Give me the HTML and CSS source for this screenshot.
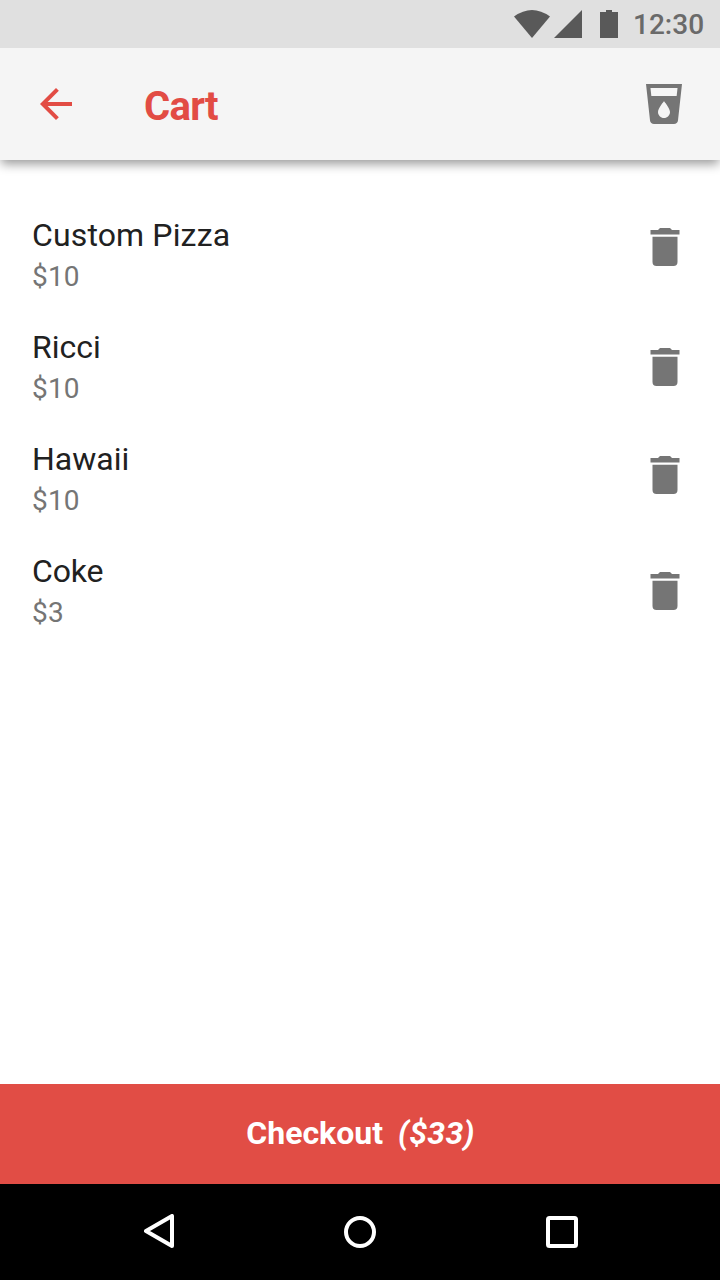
FILE: index.html
```html
<!DOCTYPE html>
<html lang="en">
<head>
<meta charset="utf-8">
<title>Cart</title>
<link rel="stylesheet" href="styles.css">
</head>
<body>
<svg class="defs" width="0" height="0" aria-hidden="true">
  <symbol id="trash" viewBox="0 0 30 38">
    <path d="M0.5 2H8L10 0H20L22 2H29.5V6.4H0.5ZM2.5 8.7H27.5V34Q27.5 38 23.5 38H6.5Q2.5 38 2.5 34Z"/>
  </symbol>
</svg>
<div class="screen">
  <div class="status">
    <svg class="status-icons" viewBox="0 0 106 28">
      <path d="M0 6.5Q18 -6.5 36 6.5L18 28Z"/>
      <path d="M68 0V28H40Z"/>
      <path d="M92 0H98V2H104V28H86V2H92Z"/>
    </svg>
    <span class="clock">12:30</span>
  </div>
  <header class="appbar">
    <svg class="icon back" viewBox="0 0 24 24"><path d="M20 11H7.83l5.59-5.59L12 4l-8 8 8 8 1.41-1.41L7.83 13H20z"/></svg>
    <h1 class="title">Cart</h1>
    <svg class="icon drink" viewBox="0 0 24 24"><path d="M3 2l2.01 18.23C5.13 21.23 5.97 22 7 22h10c1.03 0 1.87-.77 1.99-1.77L21 2H3zm9 17c-1.66 0-3-1.34-3-3 0-2 3-5.4 3-5.4s3 3.4 3 5.4c0 1.66-1.34 3-3 3zm6.33-11H5.67l-.44-4h13.54l-.44 4z"/></svg>
  </header>
  <main class="list">
    <div class="row">
      <div class="text"><div class="name pizza">Custom Pizza</div><div class="price">$10</div></div>
      <svg class="trash trash-high"><use href="#trash"/></svg>
    </div>
    <div class="row">
      <div class="text"><div class="name">Ricci</div><div class="price">$10</div></div>
      <svg class="trash trash-low"><use href="#trash"/></svg>
    </div>
    <div class="row">
      <div class="text"><div class="name">Hawaii</div><div class="price">$10</div></div>
      <svg class="trash"><use href="#trash"/></svg>
    </div>
    <div class="row">
      <div class="text"><div class="name coke">Coke</div><div class="price">$3</div></div>
      <svg class="trash trash-low"><use href="#trash"/></svg>
    </div>
  </main>
  <div class="checkout"><span class="label">Checkout</span><em class="total">($33)</em></div>
  <nav class="navbar">
    <svg class="nav-back" viewBox="0 0 30 34"><path d="M28 2V32L2 17Z"/></svg>
    <svg class="nav-home" viewBox="0 0 32 32"><circle cx="16" cy="16" r="14"/></svg>
    <svg class="nav-recent" viewBox="0 0 32 32"><rect x="2" y="2" width="28" height="28" rx="1.5"/></svg>
  </nav>
</div>
</body>
</html>
```
FILE: styles.css
```css
* { box-sizing: border-box; }
body { margin: 0; font-family: Roboto, "Liberation Sans", sans-serif; background: #fff; }
svg { display: block; flex: none; }
.defs { position: absolute; }
.screen { width: 720px; height: 1280px; display: flex; flex-direction: column; overflow: hidden; }
.status { height: 48px; flex: none; background: #e0e0e0; display: flex; justify-content: flex-end; align-items: center; padding-right: 16px; }
.status-icons { width: 106px; height: 28px; margin-right: 13px; fill: #595959; }
.clock { width: 71px; padding-top: 2px; font-size: 28px; font-weight: 500; line-height: 46px; color: #6a6a6a; white-space: nowrap; }
.appbar { height: 112px; flex: none; background: #f5f5f5; display: flex; align-items: center; padding: 0 32px 0 31.5px; box-shadow: 0 5px 10px -1px rgba(0, 0, 0, .4); clip-path: inset(0 0 -20px 0); }
.icon { width: 48px; height: 48px; }
.back { fill: #e24c44; }
.title { margin: 6px auto 0 64.5px; font-size: 40px; line-height: 48px; font-weight: 700; letter-spacing: -.7px; color: #e24c44; }
.drink { fill: #757575; }
.list { flex: 1; padding: 32px 40px 0 32px; }
.row { height: 112px; display: flex; justify-content: space-between; }
.text { padding-top: 23px; }
.name { font-size: 32px; line-height: 40px; color: #212121; white-space: nowrap; }
.pizza { letter-spacing: .14px; }
.coke { letter-spacing: -.2px; }
.price { margin-top: 6px; font-size: 28px; line-height: 32px; letter-spacing: .2px; color: #757575; }
.trash { width: 30px; height: 38px; margin-top: 40px; fill: #757575; }
.trash-high { margin-top: 36px; }
.trash-low { margin-top: 44px; }
.checkout { height: 100px; flex: none; background: #e14d45; color: #fff; display: flex; justify-content: center; gap: 15px; padding-left: 1px; font-size: 32px; line-height: 98px; font-weight: 700; white-space: nowrap; }
.total { letter-spacing: .3px; }
.navbar { height: 96px; flex: none; background: #000; display: flex; align-items: flex-start; justify-content: space-between; padding: 30px 142px 0 144px; }
.navbar svg { fill: none; stroke: #fff; stroke-width: 4; stroke-linejoin: round; }
.nav-back { width: 30px; height: 34px; }
.nav-home { width: 32px; height: 32px; margin: 2px 0 0; }
.nav-recent { width: 32px; height: 32px; margin-top: 2px; }
```
